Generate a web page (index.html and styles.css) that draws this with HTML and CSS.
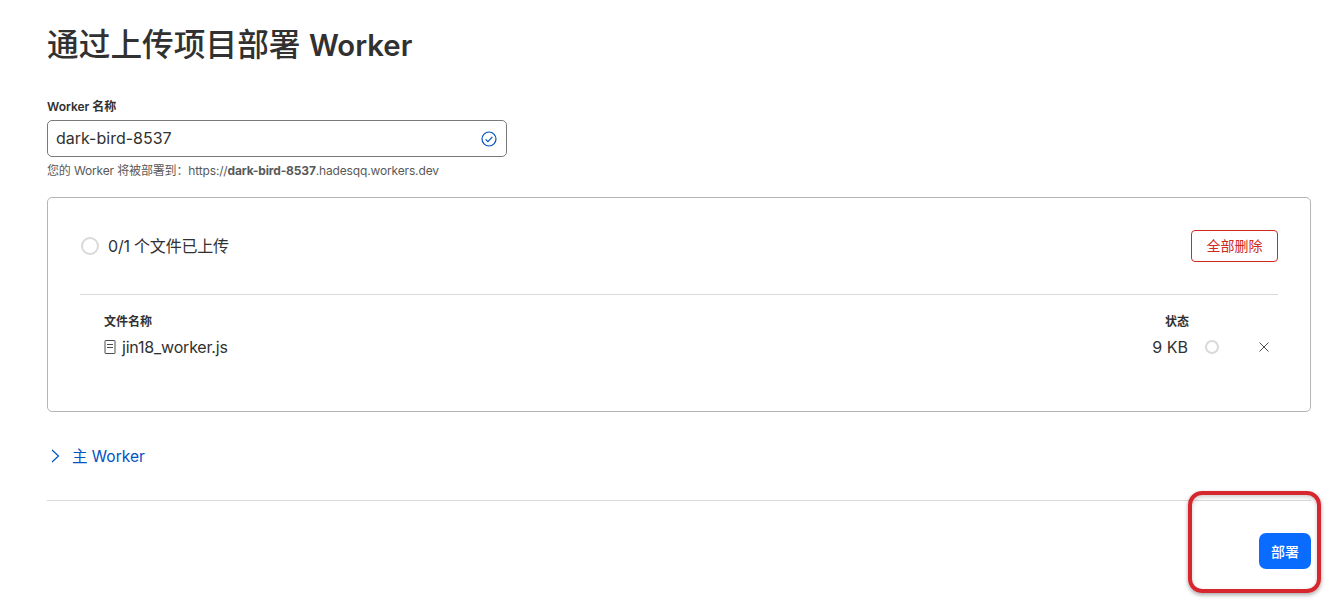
FILE: index.html
```html
<!DOCTYPE html>
<html lang="zh-CN">
<head>
    <meta charset="UTF-8">
    <title>通过上传项目部署 Worker</title>
    <link rel="stylesheet" href="styles.css">
</head>
<body>
    <div class="container">
        <h1 class="page-title">通过上传项目部署 <span class="page-title-latin">Worker</span></h1>

        <div class="field">
            <label class="field-label">Worker 名称</label>
            <div class="input-box">
                <span class="input-value">dark-bird-8537</span>
                <svg class="input-check" width="16" height="16" viewBox="0 0 16 16" fill="none">
                    <circle cx="8" cy="8" r="7" stroke="#0051c3" stroke-width="1.2"/>
                    <path d="M4.6 8.3l2.3 2.3 4.5-4.7" stroke="#0051c3" stroke-width="1.2"/>
                </svg>
            </div>
            <div class="field-hint">您的 Worker 将被部署到：https://<b>dark-bird-8537</b>.hadesqq.workers.dev</div>
        </div>

        <div class="upload-card">
            <div class="upload-header">
                <div class="upload-status">
                    <span class="spinner spinner-large"></span>
                    <span class="upload-count">0/1 个文件已上传</span>
                </div>
                <button class="btn-danger">全部删除</button>
            </div>
            <div class="file-table">
                <div class="file-row file-head">
                    <span>文件名称</span>
                    <span class="file-status-head">状态</span>
                </div>
                <div class="file-row file-item">
                    <div class="file-name">
                        <svg width="12" height="14" viewBox="0 0 12 14" fill="none" stroke="#4d4d4d">
                            <rect x="1" y="0.5" width="10" height="13" rx="0.5"/>
                            <path d="M3 4.5h6M3 7.5h6"/>
                        </svg>
                        <span>jin18_worker.js</span>
                    </div>
                    <div class="file-meta">
                        <span class="file-size">9 KB</span>
                        <span class="spinner spinner-small"></span>
                        <svg class="file-remove" width="10" height="10" viewBox="0 0 10 10" fill="none" stroke="#4d4d4d">
                            <path d="M0.5 0.5l9 9M9.5 0.5l-9 9"/>
                        </svg>
                    </div>
                </div>
            </div>
        </div>

        <div class="collapse-row">
            <svg width="9" height="14" viewBox="0 0 9 14" fill="none" stroke="#0051c3" stroke-width="1.2">
                <path d="M1 1l6.5 6L1 13"/>
            </svg>
            <span class="collapse-label">主 Worker</span>
        </div>

        <div class="footer">
            <button class="btn-primary">部署</button>
        </div>
    </div>

    <div class="annotation"></div>
</body>
</html>
```

FILE: styles.css
```css
* {
    box-sizing: border-box;
}

body {
    margin: 0;
    background-color: #fff;
    color: #313131;
    font-family: Inter, "Noto Sans CJK SC", sans-serif;
    font-size: 16px;
}

.container {
    padding: 0 17px 0 47px;
}

.page-title {
    margin: 0;
    padding-top: 25px;
    font-size: 31.7px;
    line-height: 40px;
    font-weight: 500;
}

.page-title-latin {
    font-size: 29.3px;
    font-weight: 600;
}

.field {
    margin-top: 33px;
}

.field-label {
    display: block;
    font-size: 12px;
    line-height: 16px;
    font-weight: 600;
    margin-bottom: 5px;
}

.input-box {
    width: 460px;
    height: 37px;
    display: flex;
    align-items: center;
    justify-content: space-between;
    padding: 0 9px 0 8px;
    border: 1px solid #797979;
    border-radius: 5px;
}

.input-value {
    padding-bottom: 2px;
}

.field-hint {
    margin-top: 6px;
    font-size: 12px;
    line-height: 16px;
    letter-spacing: -0.15px;
    color: #595959;
}

.upload-card {
    margin-top: 18px;
    height: 215px;
    padding: 32px;
    border: 1px solid #b5b5b5;
    border-radius: 5px;
}

.upload-header {
    display: flex;
    align-items: center;
    justify-content: space-between;
    padding-bottom: 32px;
    border-bottom: 1px solid #d9d9d9;
}

.upload-status {
    display: flex;
    align-items: center;
    gap: 9px;
    margin-left: 1px;
}

.upload-count {
    padding-bottom: 2px;
    letter-spacing: -0.2px;
}

.spinner {
    display: inline-block;
    border-radius: 50%;
    border: 2px solid #d9d9d9;
}

.spinner-large {
    width: 18px;
    height: 18px;
}

.spinner-small {
    width: 14px;
    height: 14px;
}

.btn-danger {
    width: 87px;
    height: 32px;
    padding: 0 0 3px;
    background: #fff;
    border: 1px solid #cf2a1b;
    border-radius: 4px;
    color: #cf2a1b;
    font-family: inherit;
    font-size: 14px;
}

.file-table {
    padding: 19px 0 0 24px;
}

.file-row {
    display: flex;
    justify-content: space-between;
}

.file-head {
    font-size: 12px;
    line-height: 16px;
    font-weight: 600;
}

.file-status-head {
    margin-right: 89px;
}

.file-item {
    align-items: center;
    margin-top: 5px;
    height: 24px;
}

.file-name {
    display: flex;
    align-items: center;
    gap: 6px;
    letter-spacing: -0.2px;
}

.file-meta {
    display: flex;
    align-items: center;
}

.file-size {
    margin-right: 17px;
}

.file-remove {
    margin: 0 9px 0 40px;
}

.collapse-row {
    display: flex;
    align-items: center;
    gap: 12px;
    padding-left: 4px;
    height: 89px;
    color: #0051c3;
    font-size: 15.5px;
    border-bottom: 1px solid #d9d9d9;
}

.collapse-label {
    padding-bottom: 3px;
}

.footer {
    display: flex;
    justify-content: flex-end;
    padding-top: 32px;
}

.btn-primary {
    width: 52px;
    height: 36px;
    padding: 0;
    border: 0;
    border-radius: 7px;
    background-color: #0a6cff;
    color: #fff;
    font-family: inherit;
    font-size: 14px;
    font-weight: 500;
}

/* red highlight drawn over the screenshot */
.annotation {
    position: absolute;
    left: 1188px;
    top: 491px;
    width: 133px;
    height: 102px;
    border: 4px solid #d6262e;
    border-radius: 14px;
    box-shadow: 0 2px 4px rgba(0, 0, 0, 0.35), inset 0 2px 4px rgba(0, 0, 0, 0.2);
}
```
